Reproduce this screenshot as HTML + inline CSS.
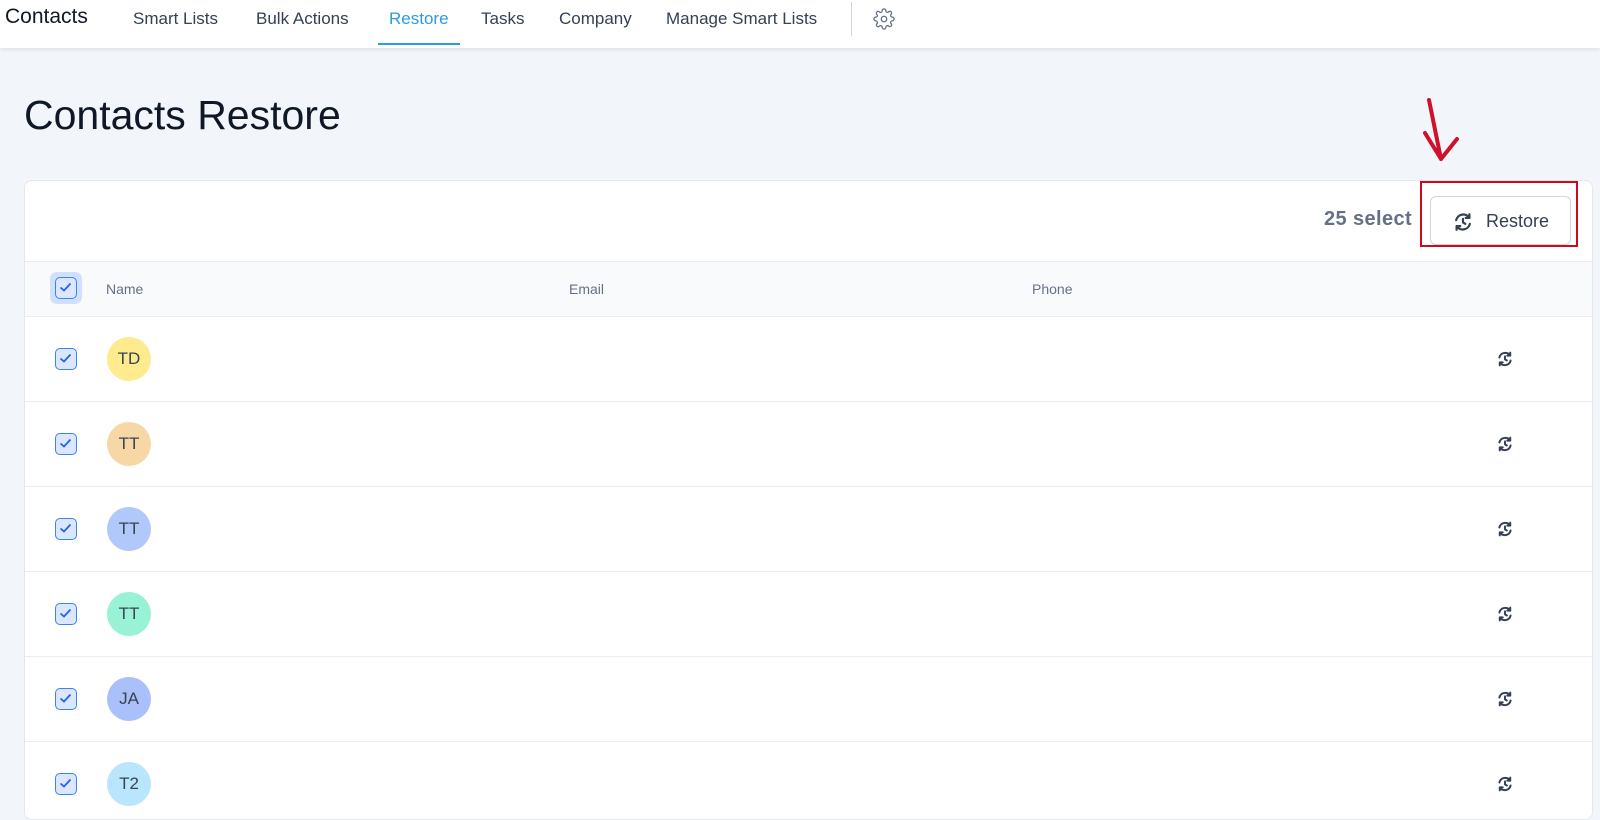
<!DOCTYPE html>
<html><head><style>
*{box-sizing:border-box;margin:0;padding:0}
body{width:1600px;height:804px;overflow:hidden;background:#f2f6fa;font-family:"Liberation Sans",sans-serif;position:relative}
.top{position:absolute;left:0;top:0;width:1600px;height:48px;background:#fff;box-shadow:0 2px 4px rgba(0,0,0,.08)}
.top span{position:absolute;top:9px;font-size:17px;color:#344054}
.title{position:absolute;left:24px;top:93px;font-size:41px;color:#101828}
.card{position:absolute;left:24px;top:180px;width:1569px;height:640px;background:#fff;border:1px solid #e4e7ec;border-radius:8px;overflow:hidden}
.hdr{position:absolute;left:0;top:80px;width:100%;height:56px;background:#f9fafb;border-top:1px solid #eaecf0;border-bottom:1px solid #eaecf0}
.hdr span{position:absolute;top:19px;font-size:14px;color:#667085}
.cb{position:absolute;width:22px;height:22px;border:1.5px solid #3b82f6;border-radius:5px;background:#dbe7ff}
.cb svg{position:absolute;left:3px;top:4px}
.row{position:absolute;left:0;width:100%;height:85px;border-bottom:1px solid #eaecf0}
.av{position:absolute;left:82px;top:20px;width:44px;height:44px;border-radius:50%;text-align:center;line-height:44px;font-size:17px;color:#3a4252}
.ri{position:absolute;left:1471px;top:33px}
</style></head><body>
<div class="top">
<span style="left:5px;top:5px;font-size:21px;color:#101828">Contacts</span>
<span style="left:133px">Smart Lists</span>
<span style="left:256px">Bulk Actions</span>
<span style="left:389px;color:#2d9cdb">Restore</span>
<span style="left:481px">Tasks</span>
<span style="left:559px">Company</span>
<span style="left:666px">Manage Smart Lists</span>
<div style="position:absolute;left:378px;top:43px;width:82px;height:2px;background:#2d9cdb"></div>
<div style="position:absolute;left:851px;top:2px;width:1px;height:34px;background:#d0d5dd"></div>
<svg style="position:absolute;left:873px;top:8px" width="22" height="22" viewBox="0 0 24 24" fill="none" stroke="#667085" stroke-width="1.4"><circle cx="12" cy="12" r="3"/><path d="M19.4 15a1.65 1.65 0 0 0 .33 1.820l.06.06a2 2 0 1 1-2.830 2.830l-.06-.06a1.65 1.65 0 0 0-1.820-.33 1.65 1.65 0 0 0-1 1.510V21a2 2 0 1 1-4 0v-.09A1.65 1.65 0 0 0 9 19.4a1.65 1.65 0 0 0-1.820.33l-.06.06a2 2 0 1 1-2.830-2.830l.06-.06A1.65 1.65 0 0 0 4.680 15a1.65 1.65 0 0 0-1.510-1H3a2 2 0 1 1 0-4h.09A1.65 1.65 0 0 0 4.6 9a1.65 1.65 0 0 0-.33-1.820l-.06-.06a2 2 0 1 1 2.830-2.830l.06.06A1.65 1.65 0 0 0 9 4.680a1.65 1.65 0 0 0 1-1.510V3a2 2 0 1 1 4 0v.09a1.65 1.65 0 0 0 1 1.510 1.65 1.65 0 0 0 1.820-.33l.06-.06a2 2 0 1 1 2.830 2.830l-.06.06A1.65 1.65 0 0 0 19.4 9a1.65 1.65 0 0 0 1.510 1H21a2 2 0 1 1 0 4h-.09a1.65 1.65 0 0 0-1.510 1z"/></svg>
</div>
<div class="title" style="top:92px">Contacts Restore</div>
<svg style="position:absolute;left:1415px;top:95px" width="50" height="75"><path d="M14 5 L26 64 M10 38 L26 64 L42 44" stroke="#d0112b" stroke-width="4" fill="none" stroke-linecap="round" stroke-linejoin="round"/></svg>
<div class="card">
<span style="position:absolute;left:1299px;top:27px;font-size:20px;font-weight:bold;color:#667085;letter-spacing:0.4px">25 select</span>
<div style="position:absolute;left:1405px;top:15px;width:141px;height:49px;border:1px solid #d0d5dd;border-radius:6px;background:#fff">
<svg style="position:absolute;left:21px;top:14px" width="22" height="22" viewBox="0 0 24 24" fill="none" stroke="#344054" stroke-width="2.4" stroke-linecap="round" stroke-linejoin="round"><path d="M4.5 10a8 8 0 0 1 14.5-2.5M19.5 14a8 8 0 0 1-14.5 2.5M19 3.5v4h-4M5 20.5v-4h4M12 8.5v4l2.5 1.5"/></svg>
<span style="position:absolute;left:55px;top:14px;font-size:18px;color:#344054">Restore</span></div>
<div style="position:absolute;left:1395px;top:0px;width:158px;height:66px;border:2.5px solid #cc0a1e"></div>
<div class="hdr">
<div style="position:absolute;left:25px;top:10px;width:32px;height:32px;border-radius:7px;background:#d1e0ff"></div>
<div class="cb" style="left:30px;top:15px"><svg width="13" height="11" viewBox="0 0 13 11"><path d="M1.5 5.5l3.5 3 6.5-7" stroke="#2563eb" stroke-width="1.8" fill="none"/></svg></div>
<span style="left:81px">Name</span><span style="left:544px">Email</span><span style="left:1007px">Phone</span>
</div>
<div style="position:absolute;left:0;top:136px;width:100%">
<div class="row" style="top:0"><div class="cb" style="left:30px;top:31px"><svg width="13" height="11" viewBox="0 0 13 11"><path d="M1.5 5.5l3.5 3 6.5-7" stroke="#2563eb" stroke-width="1.8" fill="none"/></svg></div><div class="av" style="background:#fdeb8d">TD</div><svg class="ri" width="18" height="18" viewBox="0 0 24 24" fill="none" stroke="#344054" stroke-width="2.6" stroke-linecap="round" stroke-linejoin="round"><path d="M4.5 10a8 8 0 0 1 14.5-2.5M19.5 14a8 8 0 0 1-14.5 2.5M19 3.5v4h-4M5 20.5v-4h4M12 8.5v4l2.5 1.5"/></svg></div>
<div class="row" style="top:85px"><div class="cb" style="left:30px;top:31px"><svg width="13" height="11" viewBox="0 0 13 11"><path d="M1.5 5.5l3.5 3 6.5-7" stroke="#2563eb" stroke-width="1.8" fill="none"/></svg></div><div class="av" style="background:#f8d7a7">TT</div><svg class="ri" width="18" height="18" viewBox="0 0 24 24" fill="none" stroke="#344054" stroke-width="2.6" stroke-linecap="round" stroke-linejoin="round"><path d="M4.5 10a8 8 0 0 1 14.5-2.5M19.5 14a8 8 0 0 1-14.5 2.5M19 3.5v4h-4M5 20.5v-4h4M12 8.5v4l2.5 1.5"/></svg></div>
<div class="row" style="top:170px"><div class="cb" style="left:30px;top:31px"><svg width="13" height="11" viewBox="0 0 13 11"><path d="M1.5 5.5l3.5 3 6.5-7" stroke="#2563eb" stroke-width="1.8" fill="none"/></svg></div><div class="av" style="background:#b1c8fb">TT</div><svg class="ri" width="18" height="18" viewBox="0 0 24 24" fill="none" stroke="#344054" stroke-width="2.6" stroke-linecap="round" stroke-linejoin="round"><path d="M4.5 10a8 8 0 0 1 14.5-2.5M19.5 14a8 8 0 0 1-14.5 2.5M19 3.5v4h-4M5 20.5v-4h4M12 8.5v4l2.5 1.5"/></svg></div>
<div class="row" style="top:255px"><div class="cb" style="left:30px;top:31px"><svg width="13" height="11" viewBox="0 0 13 11"><path d="M1.5 5.5l3.5 3 6.5-7" stroke="#2563eb" stroke-width="1.8" fill="none"/></svg></div><div class="av" style="background:#9af2d6">TT</div><svg class="ri" width="18" height="18" viewBox="0 0 24 24" fill="none" stroke="#344054" stroke-width="2.6" stroke-linecap="round" stroke-linejoin="round"><path d="M4.5 10a8 8 0 0 1 14.5-2.5M19.5 14a8 8 0 0 1-14.5 2.5M19 3.5v4h-4M5 20.5v-4h4M12 8.5v4l2.5 1.5"/></svg></div>
<div class="row" style="top:340px"><div class="cb" style="left:30px;top:31px"><svg width="13" height="11" viewBox="0 0 13 11"><path d="M1.5 5.5l3.5 3 6.5-7" stroke="#2563eb" stroke-width="1.8" fill="none"/></svg></div><div class="av" style="background:#a9c0fb">JA</div><svg class="ri" width="18" height="18" viewBox="0 0 24 24" fill="none" stroke="#344054" stroke-width="2.6" stroke-linecap="round" stroke-linejoin="round"><path d="M4.5 10a8 8 0 0 1 14.5-2.5M19.5 14a8 8 0 0 1-14.5 2.5M19 3.5v4h-4M5 20.5v-4h4M12 8.5v4l2.5 1.5"/></svg></div>
<div class="row" style="top:425px"><div class="cb" style="left:30px;top:31px"><svg width="13" height="11" viewBox="0 0 13 11"><path d="M1.5 5.5l3.5 3 6.5-7" stroke="#2563eb" stroke-width="1.8" fill="none"/></svg></div><div class="av" style="background:#b9e6fd">T2</div><svg class="ri" width="18" height="18" viewBox="0 0 24 24" fill="none" stroke="#344054" stroke-width="2.6" stroke-linecap="round" stroke-linejoin="round"><path d="M4.5 10a8 8 0 0 1 14.5-2.5M19.5 14a8 8 0 0 1-14.5 2.5M19 3.5v4h-4M5 20.5v-4h4M12 8.5v4l2.5 1.5"/></svg></div>
</div>
</div>
</body></html>
